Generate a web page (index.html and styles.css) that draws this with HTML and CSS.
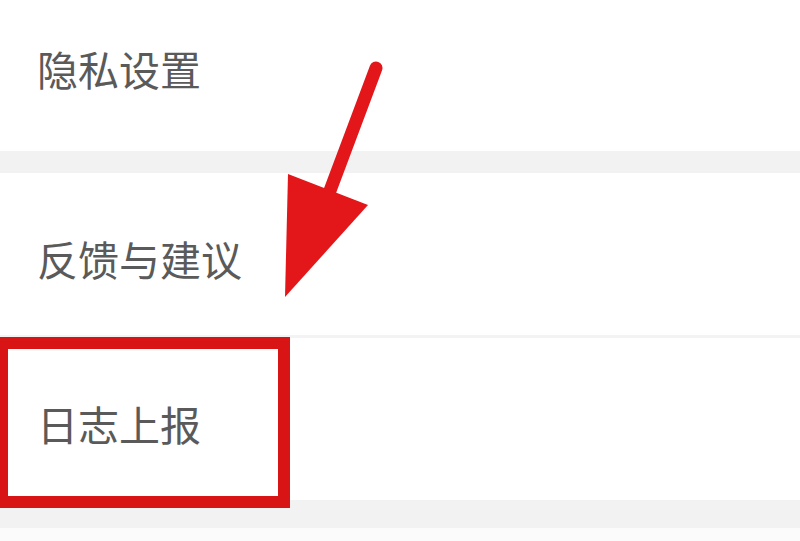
FILE: index.html
```html
<!DOCTYPE html>
<html lang="zh-CN">

<head>
    <meta charset="UTF-8" />
    <meta name="viewport" content="width=device-width, initial-scale=1" />
    <title>设置</title>
    <link rel="stylesheet" href="styles.css">
</head>

<body>
    <div class="settings">
        <div class="item item-first">隐私设置</div>
        <div class="gap"></div>
        <div class="item item-feedback">反馈与建议</div>
        <div class="divider"></div>
        <div class="item item-log">日志上报</div>
        <div class="gap gap-bottom"></div>
        <div class="tail"></div>

        <!-- Kırmızı işaretler -->
        <div class="mark-box"></div>
        <svg class="mark-arrow" width="800" height="541" viewBox="0 0 800 541" aria-hidden="true">
            <line x1="376" y1="68" x2="322" y2="212" stroke="#e3161a" stroke-width="13" stroke-linecap="round" />
            <polygon points="288,174 368,205 285,297" fill="#e3161a" />
        </svg>
    </div>
</body>

</html>
```

FILE: styles.css
```css
:root {
    --bg: #fff;
    --band: #f2f2f2;
    --text: #5a5a5a;
    --mark: #d81414;
}

body {
    margin: 0;
    background-color: var(--bg);
    font-family: "Noto Sans CJK SC", "Noto Sans", sans-serif;
    overflow: hidden;
}

.settings {
    position: relative;
    width: 800px;
    height: 541px;
    display: flex;
    flex-direction: column;
}

.item {
    display: flex;
    align-items: center;
    padding-left: 37px;
    font-size: 41px;
    color: var(--text);
    background-color: var(--bg);
    box-sizing: border-box;
}

.item-first {
    height: 151px;
    padding-bottom: 16px;
}

.item-feedback {
    height: 162px;
    padding-top: 8px;
}

.item-log {
    height: 162px;
    padding-top: 8px;
}

.gap {
    height: 22px;
    background-color: var(--band);
}

.gap-bottom {
    height: 28px;
}

.divider {
    height: 3px;
    background-color: #f3f3f3;
}

.tail {
    flex: 1;
    background-color: #fbfbfb;
}

.mark-box {
    position: absolute;
    left: -4px;
    top: 337px;
    width: 270px;
    height: 147px;
    border: 12px solid var(--mark);
}

.mark-arrow {
    position: absolute;
    left: 0;
    top: 0;
}
```
